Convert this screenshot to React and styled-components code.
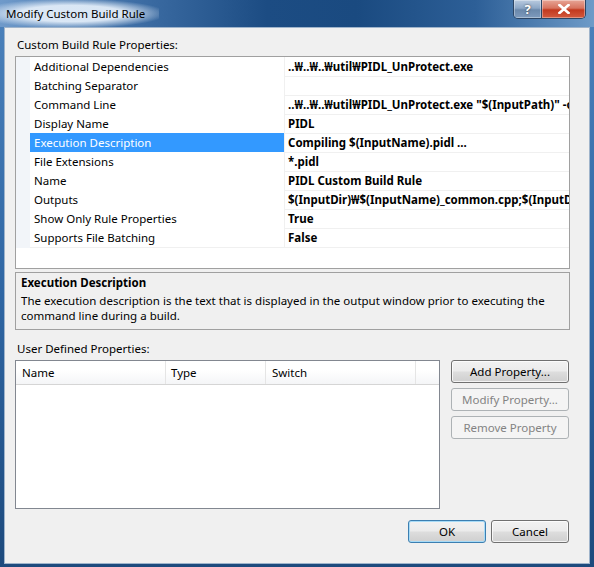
import React from 'react'
import styled, { createGlobalStyle } from 'styled-components'

const GlobalStyle = createGlobalStyle`
  html, body {
    margin: 0;
    padding: 0;
  }
  body {
    background: #1d4a7e;
    font-family: "Noto Sans", "Noto Sans CJK KR", sans-serif;
  }
`

const FONT = `"Noto Sans", "DejaVu Sans", "Noto Sans CJK KR", sans-serif`

const Window = styled.div`
  width: 594px;
  height: 567px;
  display: flex;
  flex-direction: column;
  background: #2a5f99;
  overflow: hidden;
`

const TitleBar = styled.div`
  height: 27px;
  flex: none;
  display: flex;
  align-items: flex-start;
  background: linear-gradient(90deg, #6f9aca 0%, #3f6fa6 22%, #1c4c83 45%, #1a4a80 60%, #2d5f97 80%, #6e9bc8 100%);
`

const Title = styled.div`
  height: 27px;
  padding: 0 14px 0 6px;
  display: flex;
  align-items: center;
  font: 11.5px ${FONT};
  color: #000;
  background: radial-gradient(ellipse 60% 55% at 45% 50%, rgba(225, 236, 248, 0.95) 55%, rgba(200, 218, 238, 0) 100%);
`

const CaptionGroup = styled.div`
  margin-left: auto;
  margin-right: 8px;
  display: flex;
  border: 1px solid #2c4564;
  border-top: none;
  border-radius: 0 0 5px 5px;
  overflow: hidden;
`

const CaptionButton = styled.div`
  width: ${({ $w }) => $w}px;
  height: 18px;
  display: flex;
  align-items: center;
  justify-content: center;
  font: bold 13px ${FONT};
  color: #fff;
  text-shadow: 0 0 2px #333;
  background: ${({ $close }) =>
    $close
      ? 'linear-gradient(180deg, #e7a596 0%, #d7735f 45%, #c2391f 55%, #d35a3e 100%)'
      : 'linear-gradient(180deg, #b9cbe0 0%, #8da7c6 45%, #6a88ab 55%, #7e9bbd 100%)'};
  border-left: ${({ $close }) => ($close ? '1px solid #2c4564' : 'none')};
  box-shadow: inset 0 0 0 1px rgba(255, 255, 255, 0.35);
`

const Frame = styled.div`
  flex: 1;
  display: flex;
  min-height: 0;
  padding: 0 4px 3px 4px;
  background: linear-gradient(180deg, #4a80ba 0%, #2f66a3 50%, #1d4a7d 100%);
`

const Client = styled.div`
  flex: 1;
  min-width: 0;
  display: flex;
  flex-direction: column;
  padding: 0 19px 0 10px;
  border: 1px solid #9fb4cb;
  background: #f0f0f0;
  font: 11.5px ${FONT};
  color: #000;
`

const Label = styled.div`
  margin-top: ${({ $top }) => $top}px;
  height: 16px;
  line-height: 16px;
  padding-left: 2px;
  white-space: nowrap;
`

const PropertyGrid = styled.div`
  margin-top: 3px;
  height: 213px;
  box-sizing: border-box;
  border: 1px solid #a0a0a0;
  background: #fff;
  overflow: hidden;
`

const GridRow = styled.div`
  display: grid;
  grid-template-columns: 14px 254px minmax(0, 1fr);
  height: 19px;
`

const Strip = styled.div`
  background: #f2f5f9;
`

const NameCell = styled.div`
  padding-left: 4px;
  line-height: 19px;
  border-bottom: 1px solid #f0f0f0;
  white-space: nowrap;
  background: ${({ $selected }) => ($selected ? '#3399ff' : '#fff')};
  color: ${({ $selected }) => ($selected ? '#fff' : '#000')};
`

const ValueCell = styled.div`
  padding-left: 3px;
  line-height: 19px;
  font-weight: bold;
  border-left: 1px solid #f0f0f0;
  border-bottom: 1px solid #f0f0f0;
  white-space: nowrap;
  overflow: hidden;
`

const DescPanel = styled.div`
  margin-top: 3px;
  height: 58px;
  box-sizing: border-box;
  border: 1px solid #a0a0a0;
  padding: 2px 5px 0 5px;
  line-height: 15px;
`

const DescTitle = styled.div`
  font-weight: bold;
  height: 18px;
`

const DescLine = styled.div`
  white-space: nowrap;
`

const Lower = styled.div`
  margin-top: 3px;
  display: flex;
  align-items: flex-start;
`

const ListView = styled.div`
  width: 425px;
  height: 149px;
  box-sizing: border-box;
  border: 1px solid #828790;
  background: #fff;
`

const ListHeader = styled.div`
  display: grid;
  grid-template-columns: 150px 100px 150px 1fr;
  height: 24px;
  box-sizing: border-box;
  border-bottom: 1px solid #d5d5d5;
  background: linear-gradient(180deg, #ffffff 0%, #ffffff 40%, #f4f5f7 100%);
`

const HeaderCell = styled.div`
  padding-left: ${({ $pad }) => $pad}px;
  line-height: 23px;
  border-right: 1px solid #e5e5e5;
  &:last-child {
    border-right: none;
  }
`

const ButtonColumn = styled.div`
  margin-left: 11px;
  display: flex;
  flex-direction: column;
  gap: 5px;
`

const Button = styled.button`
  width: ${({ $w }) => $w}px;
  height: 23px;
  margin: 0;
  padding: 0;
  box-sizing: border-box;
  border-radius: 3px;
  font: 11.5px ${FONT};
  border: 1px solid ${({ disabled, $primary }) => (disabled ? '#adb2b5' : $primary ? '#3c7fb1' : '#707070')};
  color: ${({ disabled }) => (disabled ? '#838383' : '#000')};
  background: ${({ disabled }) =>
    disabled
      ? '#f4f4f4'
      : 'linear-gradient(180deg, #f2f2f2 0%, #ebebeb 48%, #dddddd 52%, #cfcfcf 100%)'};
  box-shadow: ${({ disabled, $primary }) =>
    disabled ? 'none' : $primary ? 'inset 0 0 0 1px #a7dbf7' : 'inset 0 0 0 1px rgba(255,255,255,0.75)'};
`

const Footer = styled.div`
  margin-top: 11px;
  display: flex;
  justify-content: flex-end;
  gap: 5px;
  padding-right: 1px;
`

const path = '..₩..₩..₩util₩PIDL_UnProtect.exe'

const rows = [
  ['Additional Dependencies', path],
  ['Batching Separator', ''],
  ['Command Line', `${path} "$(InputPath)" -o "$(InputDir)"`],
  ['Display Name', 'PIDL'],
  ['Execution Description', 'Compiling $(InputName).pidl ...'],
  ['File Extensions', '*.pidl'],
  ['Name', 'PIDL Custom Build Rule'],
  ['Outputs', '$(InputDir)₩$(InputName)_common.cpp;$(InputDir)₩$(InputName)_common.h'],
  ['Show Only Rule Properties', 'True'],
  ['Supports File Batching', 'False'],
]

export default function App() {
  return (
    <>
      <GlobalStyle />
      <Window>
        <TitleBar>
          <Title>Modify Custom Build Rule</Title>
          <CaptionGroup>
            <CaptionButton $w={27}>?</CaptionButton>
            <CaptionButton $w={43} $close>
              <svg width="12" height="10" viewBox="0 0 12 10">
                <path d="M1.5 1 L10.5 9 M10.5 1 L1.5 9" stroke="#fff" strokeWidth="2.6" strokeLinecap="square" />
              </svg>
            </CaptionButton>
          </CaptionGroup>
        </TitleBar>
        <Frame>
          <Client>
            <Label $top={9}>Custom Build Rule Properties:</Label>
            <PropertyGrid>
              {rows.map(([name, value]) => (
                <GridRow key={name}>
                  <Strip />
                  <NameCell $selected={name === 'Execution Description'}>{name}</NameCell>
                  <ValueCell>{value}</ValueCell>
                </GridRow>
              ))}
            </PropertyGrid>
            <DescPanel>
              <DescTitle>Execution Description</DescTitle>
              <DescLine>
                The execution description is the text that is displayed in the output window prior to executing the
              </DescLine>
              <DescLine>command line during a build.</DescLine>
            </DescPanel>
            <Label $top={11}>User Defined Properties:</Label>
            <Lower>
              <ListView>
                <ListHeader>
                  <HeaderCell $pad={6}>Name</HeaderCell>
                  <HeaderCell $pad={5}>Type</HeaderCell>
                  <HeaderCell $pad={6}>Switch</HeaderCell>
                  <HeaderCell $pad={0} />
                </ListHeader>
              </ListView>
              <ButtonColumn>
                <Button $w={118}>Add Property...</Button>
                <Button $w={118} disabled>Modify Property...</Button>
                <Button $w={118} disabled>Remove Property</Button>
              </ButtonColumn>
            </Lower>
            <Footer>
              <Button $w={78} $primary>OK</Button>
              <Button $w={78}>Cancel</Button>
            </Footer>
          </Client>
        </Frame>
      </Window>
    </>
  )
}
